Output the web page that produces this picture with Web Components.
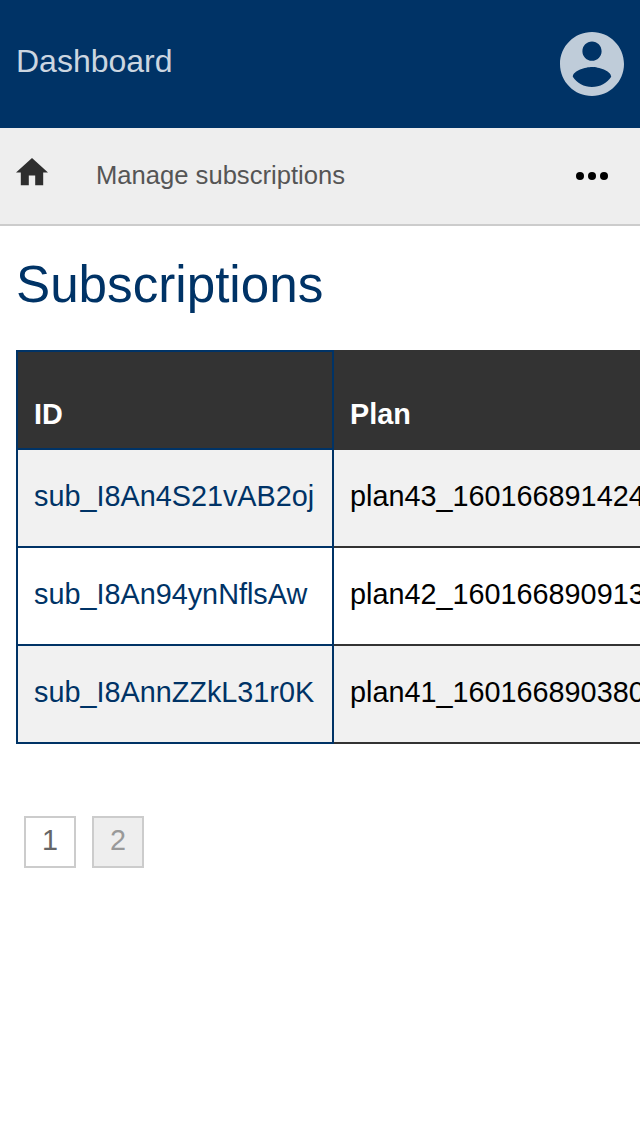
<!DOCTYPE html>
<html lang="en">
<head>
<meta charset="utf-8">
<title>Subscriptions</title>
<style>
  html, body { margin: 0; background: #fff; font-family: "Liberation Sans", Arial, sans-serif; }
  body { overflow: hidden; height: 1136px; }
</style>
</head>
<body>
<dash-header>Dashboard</dash-header>
<dash-nav>Manage subscriptions</dash-nav>
<page-title>Subscriptions</page-title>
<data-table>
  <data-row head><span slot="id">ID</span><span>Plan</span></data-row>
  <data-row shaded><span slot="id">sub_I8An4S21vAB2oj</span><span>plan43_160166891424</span></data-row>
  <data-row><span slot="id">sub_I8An94ynNflsAw</span><span>plan42_160166890913</span></data-row>
  <data-row shaded><span slot="id">sub_I8AnnZZkL31r0K</span><span>plan41_160166890380</span></data-row>
</data-table>
<page-links>
  <page-link>1</page-link>
  <page-link current>2</page-link>
</page-links>
<script>
const define = (name, html) => {
  const template = document.createElement('template');
  template.innerHTML = html;
  customElements.define(name, class extends HTMLElement {
    constructor() {
      super();
      this.attachShadow({ mode: 'open' }).append(template.content.cloneNode(true));
    }
  });
};

define('dash-header', `
  <style>
    :host { display: flex; justify-content: space-between; align-items: flex-start; box-sizing: border-box;
      height: 128px; padding: 32px 16px; background: #003366; color: #ccd6e0; font-size: 32px; line-height: 58px; }
    svg { display: block; width: 64px; height: 64px; fill: #bfccd9; }
  </style>
  <span><slot></slot></span>
  <svg viewBox="2 2 20 20"><path d="M12 2C6.48 2 2 6.48 2 12s4.48 10 10 10 10-4.48 10-10S17.52 2 12 2zm0 3c1.66 0 3 1.34 3 3s-1.34 3-3 3-3-1.34-3-3 1.34-3 3-3zm0 14.2c-2.5 0-4.71-1.28-6-3.22.03-1.99 4-3.08 6-3.08 1.99 0 5.97 1.09 6 3.08-1.29 1.94-3.5 3.22-6 3.22z"/></svg>`);

define('dash-nav', `
  <style>
    :host { display: flex; align-items: flex-start; box-sizing: border-box; height: 98px; padding: 0 32px 0 16px;
      background: #eee; border-bottom: 2px solid #ccc; color: #555; font-size: 25.6px; line-height: 94px; }
    svg { display: block; }
    .home { width: 32px; height: 27.2px; margin: 30.4px 48px 0 0; fill: #2e2e2e; }
    .more { width: 32px; height: 8px; margin: 44px 0 0 auto; }
  </style>
  <svg class="home" viewBox="2 3 20 17"><path d="M10 20v-6h4v6h5v-8h3L12 3 2 12h3v8z"/></svg>
  <span><slot></slot></span>
  <svg class="more" viewBox="0 0 32 8"><circle cx="4" cy="4" r="4"/><circle cx="16" cy="4" r="4"/><circle cx="28" cy="4" r="4"/></svg>`);

define('page-title', `
  <style>
    :host { display: block; height: 124px; padding-left: 16px; color: #003366; font-size: 51.2px; line-height: 117px; }
  </style>
  <slot></slot>`);

define('data-table', `
  <style>:host { display: flex; flex-direction: column; margin-left: 16px; overflow: hidden; }</style>
  <slot></slot>`);

define('data-row', `
  <style>
    :host { display: flex; height: 98px; font-size: 28.8px; line-height: 92px; white-space: nowrap; background: #fff; color: #000; }
    :host([shaded]) { background: #f1f1f1; }
    :host([head]) { height: 100px; background: #333; color: #fff; font-weight: bold; }
    div { box-sizing: border-box; height: 100%; padding: 0 16px; overflow: hidden; }
    .id { flex: 0 0 318px; border: solid #003366; border-width: 0 2px 2px; color: #003366; }
    .plan { flex: 1; padding-right: 0; border-bottom: 2px solid #333; }
    :host([head]) .id { border-top-width: 2px; line-height: 124px; color: #fff; }
    :host([head]) .plan { line-height: 128px; }
  </style>
  <div class="id"><slot name="id"></slot></div>
  <div class="plan"><slot></slot></div>`);

define('page-links', `
  <style>:host { display: flex; gap: 16px; margin: 72px 0 0 24px; }</style>
  <slot></slot>`);

define('page-link', `
  <style>
    :host { display: block; box-sizing: border-box; width: 52px; height: 52px; border: 2px solid #ccc;
      background: #fff; color: #666; font-size: 28.8px; line-height: 44px; text-align: center; }
    :host([current]) { background: #eee; color: #999; }
  </style>
  <slot></slot>`);
</script>
</body>
</html>
